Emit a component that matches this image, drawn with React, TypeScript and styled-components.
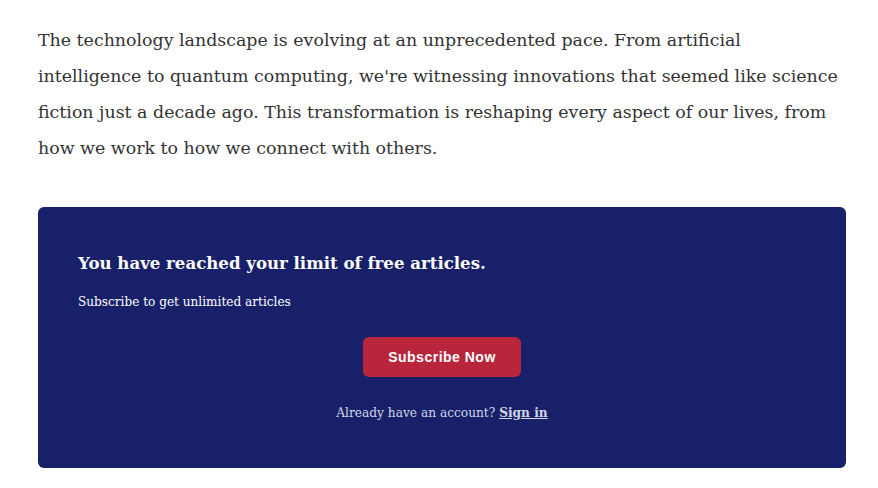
import React from "react";
import styled, { createGlobalStyle } from "styled-components";

const Global = createGlobalStyle`
  html, body { margin: 0; padding: 0; background: #ffffff; }
  body { font-family: "DejaVu Serif", Georgia, serif; }
`;

const Page = styled.main`
  width: 808px;
  padding: 22px 0 20px 38px;
`;

const Paragraph = styled.p`
  margin: 0 0 41px 0;
  font-family: "DejaVu Serif", Georgia, serif;
  font-size: 17.4px;
  line-height: 36px;
  color: #333333;
`;

const Paywall = styled.section`
  background: #18206a;
  border-radius: 6px;
  padding: 44px 40px 45px 40px;
  color: #ffffff;
`;

const Title = styled.h2`
  margin: 0 0 17px 0;
  font-family: "DejaVu Serif", Georgia, serif;
  font-weight: 700;
  font-size: 16.6px;
  line-height: 24px;
`;

const Sub = styled.p`
  margin: 0 0 25px 0;
  font-family: "DejaVu Serif", Georgia, serif;
  font-size: 12.1px;
  line-height: 20px;
  color: #ffffff;
`;

const Center = styled.div`
  display: flex;
  flex-direction: column;
  align-items: center;
`;

const Button = styled.button`
  width: 158px;
  height: 40px;
  border: none;
  border-radius: 6px;
  background: #b9253b;
  color: #ffffff;
  font-family: "Liberation Sans", Arial, sans-serif;
  font-weight: 700;
  font-size: 14px;
  letter-spacing: 0.5px;
  cursor: pointer;
`;

const Already = styled.p`
  margin: 26px 0 0 0;
  font-family: "DejaVu Serif", Georgia, serif;
  font-size: 12.2px;
  line-height: 20px;
  color: #d3d5e6;
`;

const SignIn = styled.a`
  color: #d3d5e6;
  font-weight: 700;
  text-decoration: underline;
`;

export default function App() {
  return (
    <>
      <Global />
      <Page>
        <Paragraph>
          The technology landscape is evolving at an unprecedented pace. From artificial
          intelligence to quantum computing, we're witnessing innovations that seemed like
          science fiction just a decade ago. This transformation is reshaping every aspect of
          our lives, from how we work to how we connect with others.
        </Paragraph>
        <Paywall>
          <Title>You have reached your limit of free articles.</Title>
          <Sub>Subscribe to get unlimited articles</Sub>
          <Center>
            <Button>Subscribe Now</Button>
            <Already>
              Already have an account? <SignIn href="#">Sign in</SignIn>
            </Already>
          </Center>
        </Paywall>
      </Page>
    </>
  );
}
